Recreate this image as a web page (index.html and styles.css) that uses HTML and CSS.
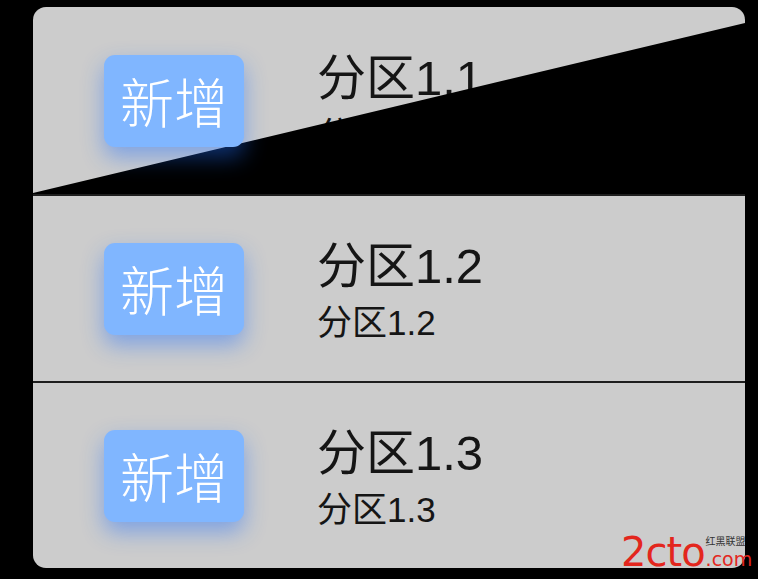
FILE: index.html
```html
<!DOCTYPE html>
<html lang="zh">
<head>
<meta charset="utf-8">
<title>分区</title>
<link rel="stylesheet" href="styles.css">
</head>
<body>
<div class="card">
  <div class="row row-first">
    <button class="add">新增</button>
    <div class="texts">
      <div class="title">分区1.1</div>
      <div class="sub">分区1.1</div>
    </div>
    <div class="wedge"></div>
  </div>
  <div class="sep"></div>
  <div class="row">
    <button class="add">新增</button>
    <div class="texts">
      <div class="title">分区1.2</div>
      <div class="sub">分区1.2</div>
    </div>
  </div>
  <div class="sep"></div>
  <div class="row row-last">
    <button class="add">新增</button>
    <div class="texts">
      <div class="title">分区1.3</div>
      <div class="sub">分区1.3</div>
    </div>
  </div>
</div>
<div class="mark"><span class="mark-num">2cto</span><span class="mark-side"><span class="mark-cn">红黑联盟</span><span class="mark-com">.com</span></span></div>
</body>
</html>
```
FILE: styles.css
```css
html, body {
  margin: 0;
  padding: 0;
  background: #000;
}
body {
  width: 758px;
  height: 579px;
  overflow: hidden;
  position: relative;
  font-family: "Liberation Sans", "Noto Sans CJK SC", sans-serif;
}
.card {
  margin: 7px 0 0 33px;
  width: 712px;
  height: 561px;
  background: #cccccc;
  border-radius: 13px;
  display: flex;
  flex-direction: column;
  overflow: hidden;
}
.row {
  position: relative;
  height: 185px;
  display: flex;
  align-items: center;
  padding-left: 71px;
  box-sizing: border-box;
}
.row-first {
  height: 187px;
}
.sep {
  height: 2px;
  background: #1e1e1e;
}
.add {
  position: relative;
  z-index: 2;
  width: 140px;
  height: 92px;
  border: 0;
  padding: 0;
  border-radius: 11px;
  background: #80b6ff;
  color: #fff;
  font-family: "Noto Sans CJK SC", sans-serif;
  font-weight: 300;
  font-size: 54px;
  line-height: 1;
  box-shadow: 0 10px 22px rgba(30, 110, 255, 0.45);
  display: flex;
  align-items: center;
  justify-content: center;
}
.texts {
  margin-left: 73px;
  display: flex;
  flex-direction: column;
  color: #151515;
  margin-top: 4px;
}
.title {
  font-size: 49px;
  line-height: 54px;
}
.sub {
  font-size: 35px;
  line-height: 40px;
  margin-top: 10px;
}
.wedge {
  position: absolute;
  left: 0;
  top: 0;
  width: 100%;
  height: 100%;
  background: #000;
  clip-path: polygon(0 186px, 100% 16px, 100% 100%, 0 100%);
  z-index: 1;
}
.mark {
  position: absolute;
  left: 621px;
  bottom: 8px;
  display: flex;
  align-items: flex-end;
  color: #e3261d;
}
.mark-num {
  font-family: "DejaVu Sans", sans-serif;
  font-size: 40px;
  line-height: 38px;
  letter-spacing: -1px;
}
.mark-side {
  display: flex;
  flex-direction: column;
  margin-left: 1px;
}
.mark-cn {
  font-family: "Noto Sans CJK SC", sans-serif;
  font-size: 10px;
  line-height: 15px;
  color: #333;
}
.mark-com {
  font-family: "DejaVu Sans", sans-serif;
  font-size: 19px;
  line-height: 23px;
}
```
